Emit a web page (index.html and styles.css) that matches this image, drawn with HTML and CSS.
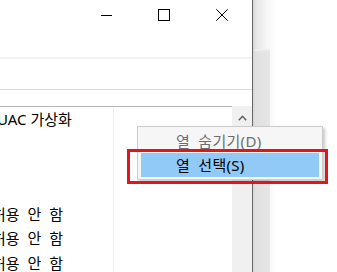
FILE: index.html
```html
<!DOCTYPE html>
<html lang="ko">
<head>
<meta charset="utf-8">
<link rel="stylesheet" href="styles.css">
</head>
<body>
<div class="screen">
  <div class="window">
    <div class="titlebar">
      <div class="cap-btn">
        <svg width="11" height="1" viewBox="0 0 11 1"><rect x="0" y="0" width="11" height="1" fill="#000"/></svg>
      </div>
      <div class="cap-btn">
        <svg width="12" height="12" viewBox="0 0 12 12"><rect x="0.5" y="0.5" width="11" height="11" fill="none" stroke="#000" stroke-width="1"/></svg>
      </div>
      <div class="cap-btn">
        <svg width="12" height="12" viewBox="0 0 12 12"><path d="M0.3 0.3 L11.7 11.7 M11.7 0.3 L0.3 11.7" stroke="#000" stroke-width="1" fill="none"/></svg>
      </div>
    </div>
    <div class="menubar"></div>
    <div class="tabstrip"></div>
    <div class="spacer"></div>
    <div class="listview">
      <div class="list">
        <div class="col col-uac">
          <div class="header"><span class="hdr-text">UAC 가상화</span></div>
          <div class="row"></div>
          <div class="row"></div>
          <div class="row"></div>
          <div class="row"><span class="cell-text">허용 안 함</span></div>
          <div class="row"><span class="cell-text">허용 안 함</span></div>
          <div class="row"><span class="cell-text">허용 안 함</span></div>
        </div>
        <div class="col col-rest"></div>
      </div>
      <div class="vscroll">
        <svg class="arrow" width="9" height="6" viewBox="0 0 9 6"><path d="M0.8 5.2 L4.5 1.3 L8.2 5.2" fill="none" stroke="#606060" stroke-width="1.5"/></svg>
      </div>
    </div>
  </div>
  <div class="edge"></div>
  <div class="backdrop"><div class="backbar"></div></div>

  <div class="context-menu">
    <div class="menu-item disabled">열 숨기기(D)</div>
    <div class="menu-item active">열 선택(S)</div>
  </div>
  <div class="callout"></div>
</div>
</body>
</html>
```
FILE: styles.css
```css
html, body {
  margin: 0;
  padding: 0;
  background: #ffffff;
}
body {
  font-family: "Noto Sans", "Noto Sans CJK KR", sans-serif;
  font-size: 15px;
  color: #000;
}
.screen {
  position: relative;
  width: 337px;
  height: 272px;
  overflow: hidden;
  display: flex;
}
.window {
  width: 252px;
  flex: none;
  display: flex;
  flex-direction: column;
  background: #fff;
}
.titlebar {
  height: 30px;
  display: flex;
  justify-content: flex-end;
  padding-right: 1px;
  flex: none;
}
.cap-btn {
  width: 58px;
  height: 30px;
  display: flex;
  align-items: center;
  justify-content: center;
}
.cap-btn svg { display: block; }
.menubar {
  height: 27px;
  border-bottom: 2px solid #f2f2f2;
  flex: none;
}
.tabstrip {
  height: 30px;
  border-bottom: 1px solid #d9d9d9;
  flex: none;
}
.spacer {
  height: 16px;
  flex: none;
}
.listview {
  flex: 1;
  display: flex;
  min-height: 0;
}
.list {
  flex: 1;
  display: flex;
  border-top: 1px solid #b9b9b9;
  overflow: hidden;
}
.col-uac {
  width: 113px;
  border-right: 1px solid #ededed;
  flex: none;
}
.col-rest {
  flex: 1;
}
.header {
  height: 21px;
  box-sizing: border-box;
  padding-top: 2px;
  line-height: 20px;
  white-space: nowrap;
}
.hdr-text {
  display: inline-block;
  margin-left: -3px;
}
.row {
  height: 24.5px;
  line-height: 24.5px;
  white-space: nowrap;
}
.cell-text {
  display: inline-block;
  margin-left: -8px;
  word-spacing: 4px;
}
.vscroll {
  width: 20px;
  flex: none;
  background: #f0f0f0;
  display: flex;
  justify-content: center;
  padding-top: 9px;
  box-sizing: border-box;
}
.vscroll .arrow { display: block; }
.edge {
  width: 1px;
  flex: none;
  background: #686868;
}
.backdrop {
  flex: 1;
  background: linear-gradient(to right, #d4d4d4 0, #e6e6e6 3px, #f6f6f6 14px, #ffffff 24px);
  display: flex;
  flex-direction: column;
}
.backbar {
  margin-top: 49px;
  margin-left: 2px;
  width: 15px;
  flex: 1;
  background: linear-gradient(to right, #e0e0e0, #e6e6e6);
  border-top: 2px solid #eeeeee;
}
.context-menu {
  position: absolute;
  left: 137px;
  top: 126px;
  width: 186px;
  box-sizing: border-box;
  background: #f6f6f6;
  border: 1px solid #cccccc;
  padding: 2px 3px;
  box-shadow: 2px 2px 3px rgba(0, 0, 0, 0.22);
}
.menu-item {
  height: 24px;
  line-height: 24px;
  padding-left: 35px;
  white-space: nowrap;
  word-spacing: 4px;
  letter-spacing: 0.3px;
}
.menu-item.disabled {
  color: #6d6d6d;
}
.menu-item.active {
  background: #91c9f7;
  color: #000;
}
.callout {
  position: absolute;
  left: 127px;
  top: 149px;
  width: 201px;
  height: 35px;
  box-sizing: border-box;
  border: 3px solid #e1161c;
}
```
